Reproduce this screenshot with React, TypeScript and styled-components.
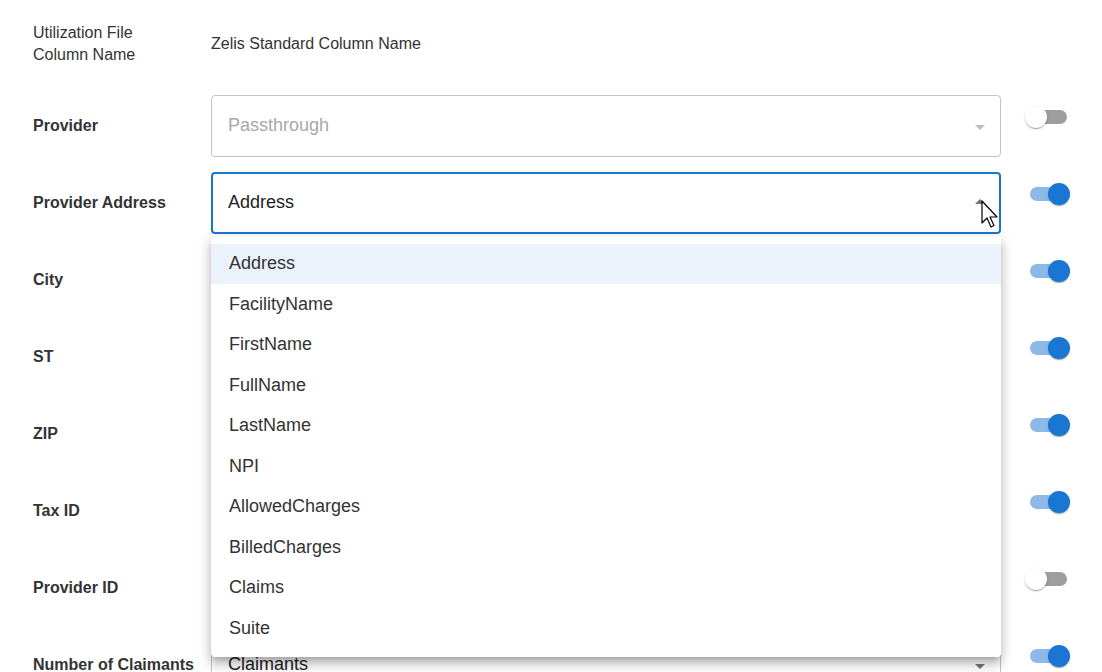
import React from 'react';
import styled, { createGlobalStyle } from 'styled-components';

const GlobalStyle = createGlobalStyle`
  html, body {
    margin: 0;
    padding: 0;
    background: #ffffff;
    font-family: 'Liberation Sans', Arial, sans-serif;
    overflow: hidden;
  }
`;

const Page = styled.div`
  position: relative;
  width: 1102px;
  height: 672px;
  padding-left: 33px;
  box-sizing: border-box;
  overflow: hidden;
`;

const HeaderRow = styled.div`
  display: grid;
  grid-template-columns: 178px 790px;
  align-items: center;
  height: 87px;
  color: #333333;
  font-size: 16px;
  line-height: 22px;
`;

const Row = styled.div`
  display: grid;
  grid-template-columns: 178px 790px auto;
  align-items: center;
  height: 77px;
`;

const Label = styled.div`
  font-size: 16px;
  font-weight: bold;
  color: #333333;
`;

const SelectBox = styled.div<{ $focused?: boolean }>`
  position: relative;
  display: flex;
  align-items: center;
  justify-content: space-between;
  height: 62px;
  box-sizing: border-box;
  border-radius: 4px;
  border: ${(p) => (p.$focused ? '2px solid #1976d2' : '1px solid #c4c4c4')};
  padding: ${(p) => (p.$focused ? '0 14px 0 15px' : '0 15px 0 16px')};
  background: #ffffff;
`;

const SelectValue = styled.span<{ $muted?: boolean }>`
  font-size: 18px;
  color: ${(p) => (p.$muted ? '#a8a8a8' : '#222222')};
`;

const Arrow = styled.span<{ $up?: boolean; $muted?: boolean }>`
  width: 0;
  height: 0;
  border-left: 5px solid transparent;
  border-right: 5px solid transparent;
  ${(p) =>
    p.$up
      ? `border-bottom: 5px solid ${p.$muted ? '#bdbdbd' : '#757575'};`
      : `border-top: 5px solid ${p.$muted ? '#bdbdbd' : '#757575'};`}
  margin-top: ${(p) => (p.$up ? '-2px' : '4px')};
`;

const Menu = styled.ul`
  position: absolute;
  top: calc(100% + 4px);
  left: -2px;
  right: -2px;
  margin: 0;
  padding: 8px 0;
  list-style: none;
  background: #ffffff;
  border-radius: 4px;
  z-index: 5;
  box-shadow: 0px 5px 5px -3px rgba(0, 0, 0, 0.2),
    0px 8px 10px 1px rgba(0, 0, 0, 0.14), 0px 3px 14px 2px rgba(0, 0, 0, 0.12);
`;

const MenuItem = styled.li<{ $selected?: boolean }>`
  height: 40.5px;
  display: flex;
  align-items: center;
  padding-left: 18px;
  font-size: 18px;
  color: #333333;
  background: ${(p) => (p.$selected ? '#ebf2fb' : 'transparent')};
`;

const SwitchRoot = styled.div`
  position: relative;
  width: 46px;
  height: 22px;
  margin-left: 24px;
  margin-bottom: 18px;
`;

const SwitchTrack = styled.div<{ $on: boolean }>`
  position: absolute;
  left: 5px;
  top: 4px;
  width: 37px;
  height: 14px;
  border-radius: 7px;
  background: ${(p) => (p.$on ? '#8cb9e8' : '#9e9e9e')};
`;

const SwitchThumb = styled.div<{ $on: boolean }>`
  position: absolute;
  top: 0;
  left: ${(p) => (p.$on ? '23px' : '0')};
  width: 22px;
  height: 22px;
  border-radius: 50%;
  background: ${(p) => (p.$on ? '#1976d2' : '#ffffff')};
  box-shadow: 0px 2px 1px -1px rgba(0, 0, 0, 0.2),
    0px 1px 1px 0px rgba(0, 0, 0, 0.14), 0px 1px 3px 0px rgba(0, 0, 0, 0.12);
`;

const Cursor = styled.svg`
  position: absolute;
  left: 981px;
  top: 200px;
  z-index: 10;
`;

const Toggle = ({ on }: { on: boolean }) => (
  <SwitchRoot>
    <SwitchTrack $on={on} />
    <SwitchThumb $on={on} />
  </SwitchRoot>
);

const options = [
  'Address',
  'FacilityName',
  'FirstName',
  'FullName',
  'LastName',
  'NPI',
  'AllowedCharges',
  'BilledCharges',
  'Claims',
  'Suite',
];

// rows under the open menu keep an empty value: the menu hides them anyway
const rows = [
  { label: 'Provider', value: 'Passthrough', muted: true, on: false },
  { label: 'Provider Address', value: 'Address', open: true, on: true },
  { label: 'City', value: '', on: true },
  { label: 'ST', value: '', on: true },
  { label: 'ZIP', value: '', on: true },
  { label: 'Tax ID', value: '', on: true },
  { label: 'Provider ID', value: '', muted: true, on: false },
  { label: 'Number of Claimants', value: 'Claimants', on: true },
];

export default function App() {
  return (
    <Page>
      <GlobalStyle />
      <HeaderRow>
        <div>
          Utilization File
          <br />
          Column Name
        </div>
        <div>Zelis Standard Column Name</div>
      </HeaderRow>
      {rows.map((row) => (
        <Row key={row.label}>
          <Label>{row.label}</Label>
          <SelectBox $focused={row.open}>
            <SelectValue $muted={row.muted}>{row.value}</SelectValue>
            <Arrow $up={row.open} $muted={row.muted} />
            {row.open && (
              <Menu>
                {options.map((opt) => (
                  <MenuItem key={opt} $selected={opt === row.value}>
                    {opt}
                  </MenuItem>
                ))}
              </Menu>
            )}
          </SelectBox>
          <Toggle on={row.on} />
        </Row>
      ))}
      <Cursor width="20" height="32" viewBox="0 0 20 32">
        <path
          d="M1 1 L1 23 L6 18 L10 27 L13 25.5 L9 17 L16 17 Z"
          fill="#ffffff"
          stroke="#000000"
          strokeWidth="1.2"
          strokeLinejoin="round"
        />
      </Cursor>
    </Page>
  );
}
